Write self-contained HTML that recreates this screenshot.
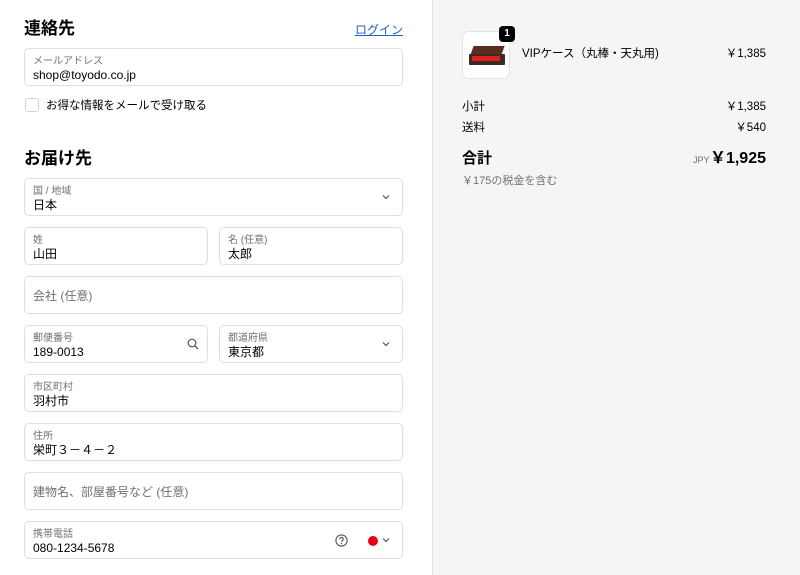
<!DOCTYPE html>
<html><head><meta charset="utf-8"><style>
*{box-sizing:border-box;margin:0;padding:0}
body{width:800px;height:575px;overflow:hidden;background:#fff;font-family:"Liberation Sans","Noto Sans CJK JP",sans-serif;color:#000;position:relative;line-height:1.2}
.right{position:absolute;left:432px;top:0;width:368px;height:575px;background:#f5f5f5;border-left:1px solid #e1e1e1}
.a{position:absolute;white-space:nowrap}
.f{position:absolute;height:38px;border:1px solid #dedede;border-radius:5px;background:#fff}
.f .l{position:absolute;left:8px;top:7px;font-size:10px;color:#707070}
.f .v{position:absolute;left:8px;top:19px;font-size:12px;color:#000}
.f .p{position:absolute;left:8px;top:12px;font-size:12px;color:#707070}
h2{position:absolute;font-size:17px;font-weight:bold}
.chev{position:absolute;right:12px;top:15px}
.s{font-size:11.5px;color:#000}
</style></head><body>
<h2 style="left:24px;top:19px">連絡先</h2>
<div class="a" style="right:397px;top:23px;font-size:12px;color:#1f5fc8;text-decoration:underline">ログイン</div>
<div class="f" style="left:24px;top:48px;width:379px"><div class="l">メールアドレス</div><div class="v">shop@toyodo.co.jp</div></div>
<div class="a" style="left:25px;top:98px;width:14px;height:14px;border:1px solid #d6d6d6;border-radius:3px"></div>
<div class="a" style="left:46px;top:100px;font-size:11.5px">お得な情報をメールで受け取る</div>
<h2 style="left:24px;top:149px">お届け先</h2>
<div class="f" style="left:24px;top:178px;width:379px"><div class="l">国 / 地域</div><div class="v">日本</div><svg class="chev" width="8" height="6" viewBox="0 0 8 6"><path d="M1 1.5l3 3 3-3" stroke="#555" stroke-width="1.2" fill="none"/></svg></div>
<div class="f" style="left:24px;top:227px;width:184px"><div class="l">姓</div><div class="v">山田</div></div>
<div class="f" style="left:219px;top:227px;width:184px"><div class="l">名 (任意)</div><div class="v">太郎</div></div>
<div class="f" style="left:24px;top:276px;width:379px"><div class="p">会社 (任意)</div></div>
<div class="f" style="left:24px;top:325px;width:184px"><div class="l">郵便番号</div><div class="v">189-0013</div><svg style="position:absolute;right:8px;top:12px" width="12" height="12" viewBox="0 0 12 12"><circle cx="5" cy="5" r="3.8" stroke="#555" stroke-width="1.2" fill="none"/><path d="M8 8l3 3" stroke="#555" stroke-width="1.3"/></svg></div>
<div class="f" style="left:219px;top:325px;width:184px"><div class="l">都道府県</div><div class="v">東京都</div><svg class="chev" width="8" height="6" viewBox="0 0 8 6"><path d="M1 1.5l3 3 3-3" stroke="#555" stroke-width="1.2" fill="none"/></svg></div>
<div class="f" style="left:24px;top:374px;width:379px"><div class="l">市区町村</div><div class="v">羽村市</div></div>
<div class="f" style="left:24px;top:423px;width:379px"><div class="l">住所</div><div class="v">栄町３－４－２</div></div>
<div class="f" style="left:24px;top:472px;width:379px"><div class="p">建物名、部屋番号など (任意)</div></div>
<div class="f" style="left:24px;top:521px;width:379px"><div class="l">携帯電話</div><div class="v">080-1234-5678</div>
<svg style="position:absolute;left:310px;top:12px" width="13" height="13" viewBox="0 0 13 13"><circle cx="6.5" cy="6.5" r="5.6" stroke="#555" stroke-width="1.1" fill="none"/><path d="M4.8 5.2a1.7 1.7 0 1 1 2.4 1.5c-.5.3-.7.6-.7 1.2" stroke="#555" stroke-width="1.1" fill="none"/><circle cx="6.5" cy="9.6" r=".7" fill="#555"/></svg>
<div style="position:absolute;left:343px;top:14px;width:10px;height:10px;border-radius:50%;background:#e60012"></div>
<svg class="chev" width="8" height="6" viewBox="0 0 8 6"><path d="M1 1.5l3 3 3-3" stroke="#555" stroke-width="1.2" fill="none"/></svg></div>

<div class="right"></div>
<div class="a" style="left:462px;top:31px;width:48px;height:48px;border-radius:7px;background:#fff;border:1px solid #e3e3e3;overflow:hidden">
<div style="position:absolute;left:9px;top:14px;width:31px;height:9px;background:#5a2e1c;transform:skewX(-20deg)"></div>
<div style="position:absolute;left:6px;top:22px;width:36px;height:11px;background:#3a2a22;border-radius:1px"></div>
<div style="position:absolute;left:9px;top:24px;width:28px;height:5px;background:#e0201c"></div></div>
<div class="a" style="left:499px;top:26px;width:16px;height:16px;border-radius:4px;background:#000;color:#fff;font-size:10px;font-weight:bold;text-align:center;line-height:16px">1</div>
<div class="a s" style="left:522px;top:48px">VIPケース（丸棒・天丸用)</div>
<div class="a s" style="right:34px;top:48px">￥1,385</div>
<div class="a s" style="left:462px;top:101px">小計</div>
<div class="a s" style="right:34px;top:101px">￥1,385</div>
<div class="a s" style="left:462px;top:122px">送料</div>
<div class="a s" style="right:34px;top:122px">￥540</div>
<div class="a" style="left:462px;top:150px;font-size:15px;font-weight:bold">合計</div>
<div class="a" style="left:693px;top:155px;font-size:9px;color:#707070">JPY</div>
<div class="a" style="right:34px;top:149px;font-size:16px;font-weight:bold">￥1,925</div>
<div class="a" style="left:462px;top:175px;font-size:11px;color:#707070">￥175の税金を含む</div>
</body></html>
